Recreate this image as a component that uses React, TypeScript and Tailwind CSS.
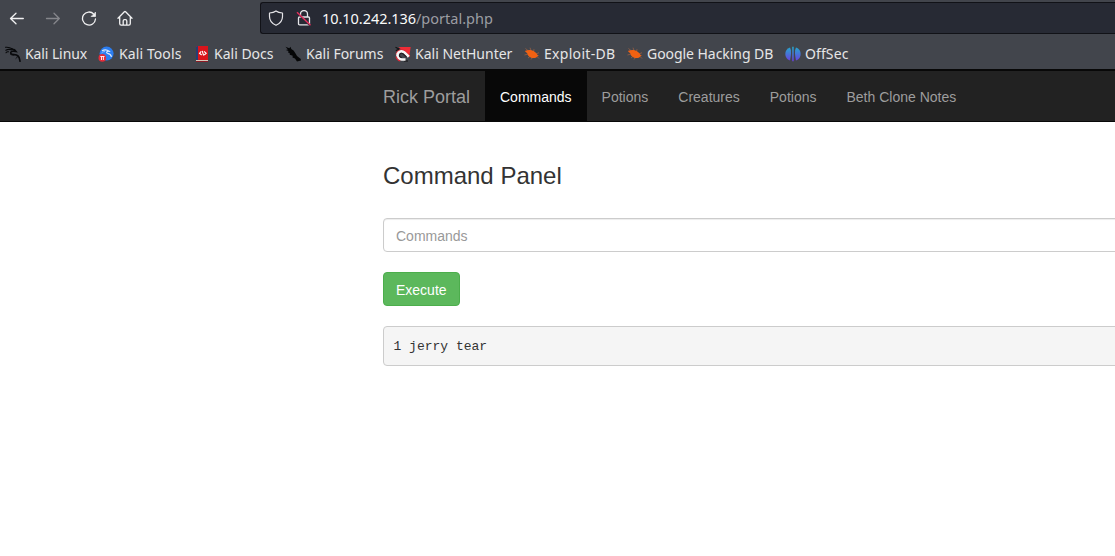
import React from "react";

const Dragon = () => (
  <svg viewBox="0 0 16 16" className="size-4 shrink-0" fill="none" stroke="#08090b" strokeLinecap="round">
    <path d="M.5 1.300C3.500.9 5.500 1.700 7.500 3M.8 4.200c2.500-1.300 4.500-.9 6-.2M3.500 5.800C2.300 5.500 1.500 6 1 6.700" strokeWidth="1.100" />
    <path d="M7 3.200 9.500 3.800l1.500 1.700-2.500-.2C7 5.200 5.600 5.700 5.700 7c.2 2.100 5 .9 7.300 2.800 1.600 1.400 1.600 3.500 2 5.500" strokeWidth="1.600" />
    <path d="M9 9.200c-1.700 0-2.700-.2-3.700-1.200M12.500 10c-.3 1.400-.8 2-1.500 2.500" strokeWidth=".9" />
  </svg>
);

const Tools = () => (
  <svg viewBox="0 0 16 16" className="size-4 shrink-0" fill="none">
    <circle cx="8.600" cy="7.600" r="7" fill="#2b7df0" />
    <path d="M4 4.700c3-1.500 5.500-.8 7 .6-2.500-.3-3 1.500-1.500 2 2.200.3 3.500 1.200 4 3.500" stroke="#dbe9fb" strokeWidth="1.200" />
    <path d="M3.500 7c1-1 2-1.400 3.500-1.400" stroke="#a9ccfb" strokeWidth=".8" />
    <circle cx="4.300" cy="11.900" r="3.800" fill="#e32d3a" />
    <path d="M2.300 10.500h4.200M3.500 10.500V14M5.400 10.500V14" stroke="#fff" strokeWidth=".9" />
  </svg>
);

const Docs = () => (
  <svg viewBox="0 0 16 16" className="size-4 shrink-0" fill="none">
    <path d="M2 0h12v14H2z" fill="#d9141b" />
    <path d="M2 .5 4 0v14H2z" fill="#253d74" />
    <path d="M2 14h12v1H2z" fill="#d8c9bb" />
    <path d="M2 15h12v.9H2z" fill="#971621" />
    <path d="M7.200 5.300 5.500 7.300l2.200 1.700M10 5.300l2.200 2-2 1.700M8.200 4.800l1.400 4.700" stroke="#fff" strokeWidth="1.100" />
  </svg>
);

const Forums = () => (
  <svg viewBox="0 0 16 16" className="size-4 shrink-0" fill="#050607">
    <path d="m.5.7 3.800 1.500L5.500.8l.8 2.200 2.500 1.800 1.900 3 1.300 2.300 3.800 2.900.2 1.400-4 1-2-3-2.500-.9.2-1.700-2.900-1L4.600 7 3 6.400 3.500 5 .8 4l2-.4z" />
  </svg>
);

const NetHunter = () => (
  <svg viewBox="0 0 16 16" className="size-4 shrink-0" fill="none">
    <path d="M3.500 1h12.200l-1.500 10L9 6z" fill="#ef2c36" />
    <path d="M.5 1.300 4 3 .8 4.700M9 15h4" stroke="#111" strokeWidth="1.100" />
    <path d="M1.200 8.500C2 4.500 6 2.700 9 4.600l5.800 5.900" stroke="#dc2937" strokeWidth="1.400" />
    <path d="M13.800 10.800 9.300 6.500C6.900 4.300 3.600 5.400 2.700 8c-1 3.100 1.100 5.500 4 5.500h3.800" stroke="#f7f5f5" strokeWidth="2.700" />
    <path d="m11.500 11-3.200-3C6.900 6.800 5.300 7.200 4.700 8.600c-.7 1.800.5 2.900 2.200 2.900" stroke="#251b20" strokeWidth="1.100" />
    <path d="M1 10.500c.6 2.200 2 3.800 4.200 4.500" stroke="#dc2937" strokeWidth="1.100" />
  </svg>
);

const Bug = () => (
  <svg viewBox="0 0 16 16" className="size-4 shrink-0" fill="none">
    <path d="m1.500 2.500 3 2.500M6 1.700l1.200 3.300M10 3.200 9.500 6M.5 9l3.500-1M4 12 6.500 10M7 13.500l1.500-2M15 6.700 12 8M15 12.500 13 10.500" stroke="#9b5f42" strokeWidth=".8" />
    <path d="M.8 5C3 4.300 5 3.800 7.500 4.300c3 .8 5.200 2.700 6 4.600l1.300.7-1.500.9c-1.300 2-5 2-7.100.7C4.600 10.400 3.700 9 3.400 7.400z" fill="#f16112" />
  </svg>
);

const OffSec = () => (
  <svg viewBox="0 0 16 16" className="size-4 shrink-0" fill="url(#offsec)">
    <defs>
      <linearGradient id="offsec" gradientUnits="userSpaceOnUse" x1="8" y1="1" x2="8" y2="15">
        <stop stopColor="#24a9ce" />
        <stop offset="1" stopColor="#6940df" />
      </linearGradient>
    </defs>
    <path d="M5 1.400Q7 5 5 14.600A7 7 0 0 1 5 1.400Z" />
    <path d="M7.200.7h1.500v14.600H7.200z" />
    <path d="M11 1.400Q9 5 11 14.600a7 7 0 0 0 0-13.200Z" />
  </svg>
);

const bookmarks = [
  { label: "Kali Linux", width: "w-[93px]", tracking: "tracking-[-0.1px]", Icon: Dragon },
  { label: "Kali Tools", width: "w-[96px]", tracking: "pl-px tracking-[0.1px]", Icon: Tools },
  { label: "Kali Docs", width: "w-[91px]", tracking: "", Icon: Docs },
  { label: "Kali Forums", width: "w-[110px]", tracking: "pl-px", Icon: Forums },
  { label: "Kali NetHunter", width: "w-[129px]", tracking: "", Icon: NetHunter },
  { label: "Exploit-DB", width: "w-[103px]", tracking: "tracking-[0.3px]", Icon: Bug },
  { label: "Google Hacking DB", width: "w-[158px]", tracking: "tracking-[-0.05px]", Icon: Bug },
  { label: "OffSec", width: "w-[90px]", tracking: "tracking-[0.1px]", Icon: OffSec },
];

function BrowserBar() {
  return (
    <div className="h-[69px] bg-[#42454c] font-['Noto_Sans',sans-serif] text-[#e6e6e7]">
      <div className="flex h-9 items-center">
        <div className="flex w-[260px] gap-5 pl-[9px]">
          <svg viewBox="0 0 16 16" className="size-4" fill="none" stroke="#f1f1f2" strokeWidth="1.300" strokeLinecap="round" strokeLinejoin="round">
            <path d="M14.300 8.500H1.500M7 3.200 1.500 8.500 7 13.800" />
          </svg>
          <svg viewBox="0 0 16 16" className="size-4" fill="none" stroke="#85868b" strokeWidth="1.300" strokeLinecap="round" strokeLinejoin="round">
            <path d="M1.500 8.500h12.800M9 3.200 14.300 8.500 9 13.800" />
          </svg>
          <svg viewBox="0 0 16 16" className="size-4" fill="none" stroke="#f1f1f2" strokeWidth="1.300" strokeLinecap="round" strokeLinejoin="round">
            <path d="M12.800 4.100A6.500 6.500 0 1 0 14.500 9" />
            <path d="M14.500 2.500v4h-4z" fill="#f1f1f2" strokeWidth=".7" />
          </svg>
          <svg viewBox="0 0 16 16" className="size-4" fill="none" stroke="#f1f1f2" strokeWidth="1.300" strokeLinecap="round" strokeLinejoin="round">
            <path d="M1 8.300 7.400 1.800q.6-.6 1.200 0L15 8.300M2.700 7.300v6.200q0 1.700 1.500 1.700h7.600q1.500 0 1.500-1.700V7.300M6.200 15.200v-4.200q0-1.300 1.200-1.300h1.200q1.200 0 1.200 1.300v4.200" />
          </svg>
        </div>
        <div className="flex h-8 flex-1 items-center rounded-l-[3px] border border-r-0 border-[#111217] bg-[#272a34] pl-[7px]">
          <svg viewBox="0 0 16 16" className="size-4" fill="none" stroke="#e5e5e8" strokeWidth="1.200" strokeLinejoin="round">
            <path d="M8 .9C6.300 2.200 4.200 2.800 1.500 3v3.500C1.500 10.600 3.800 13.500 8 15.300c4.200-1.800 6.500-4.700 6.500-8.800V3C11.800 2.800 9.700 2.200 8 .9Z" />
          </svg>
          <svg viewBox="0 0 16 16" className="ml-3 size-4" fill="none" stroke="#e5e5e8" strokeWidth="1.300">
            <path d="M4.500 7V4a3.500 3.500 0 0 1 7 0v3M4 7h8.500q1 0 1 1v5.700q0 1.200-1.200 1.200H3.700q-1.200 0-1.200-1.200V8q0-1 1-1Z" />
            <path d="m2 3.600 12.200 12.200" stroke="#272a34" strokeWidth="1.500" />
            <path d="m1 2.200 13.500 13" stroke="#e62f5d" strokeWidth="1.400" />
          </svg>
          <span className="ml-2.5 whitespace-nowrap text-[14.500px] leading-5 text-[#fafafa]">
            <span className="tracking-[-0.05px]">10.10.242.136</span>
            <span className="text-[#9c9da3]">/portal.php</span>
          </span>
        </div>
      </div>
      <div className="flex h-[33px] items-center pb-px pl-[5px] pt-1">
        {bookmarks.map(({ label, width, tracking, Icon }) => (
          <div key={label} className={`${width} flex shrink-0 items-center gap-1 whitespace-nowrap text-[14px] leading-5`}>
            <Icon />
            <span className={tracking}>{label}</span>
          </div>
        ))}
      </div>
    </div>
  );
}

export default function App() {
  return (
    <div className="h-[556px] overflow-hidden bg-white font-['Liberation_Sans',Arial,sans-serif] text-[14px] leading-5 text-[#333]">
      <BrowserBar />
      <nav className="flex h-[53px] border-b border-t-2 border-[#080808] bg-[#222] pl-[383px] text-[#9d9d9d]">
        <a className="flex w-[102px] items-center whitespace-nowrap pt-px text-[18px]">Rick Portal</a>
        <a className="flex items-center bg-[#080808] px-[15px] pt-0.5 text-white">Commands</a>
        {["Potions", "Creatures", "Potions", "Beth Clone Notes"].map((label, index) => (
          <a key={index} className="flex items-center whitespace-nowrap px-[15px] pt-0.5">{label}</a>
        ))}
      </nav>
      <main className="ml-[383px] w-[1140px] pt-[41px]">
        <h3 className="text-[24px] leading-[26px]">Command Panel</h3>
        <input
          type="text"
          placeholder="Commands"
          className="mt-[29px] block h-[34px] w-full rounded border border-[#ccc] bg-white px-3 pb-1.5 pt-[7px] shadow-[inset_0_1px_1px_rgba(0,0,0,.075)] outline-none placeholder:text-[#999]"
        />
        <button className="mt-5 block h-[34px] rounded border border-[#4cae4c] bg-[#5cb85c] px-3 pt-0.5 text-white">
          Execute
        </button>
        <pre className="mt-5 h-10 rounded border border-[#ccc] bg-[#f5f5f5] px-[9.500px] pt-[10.500px] font-['Liberation_Mono',monospace] text-[13px] leading-[18.570px]">1 jerry tear</pre>
      </main>
    </div>
  );
}
